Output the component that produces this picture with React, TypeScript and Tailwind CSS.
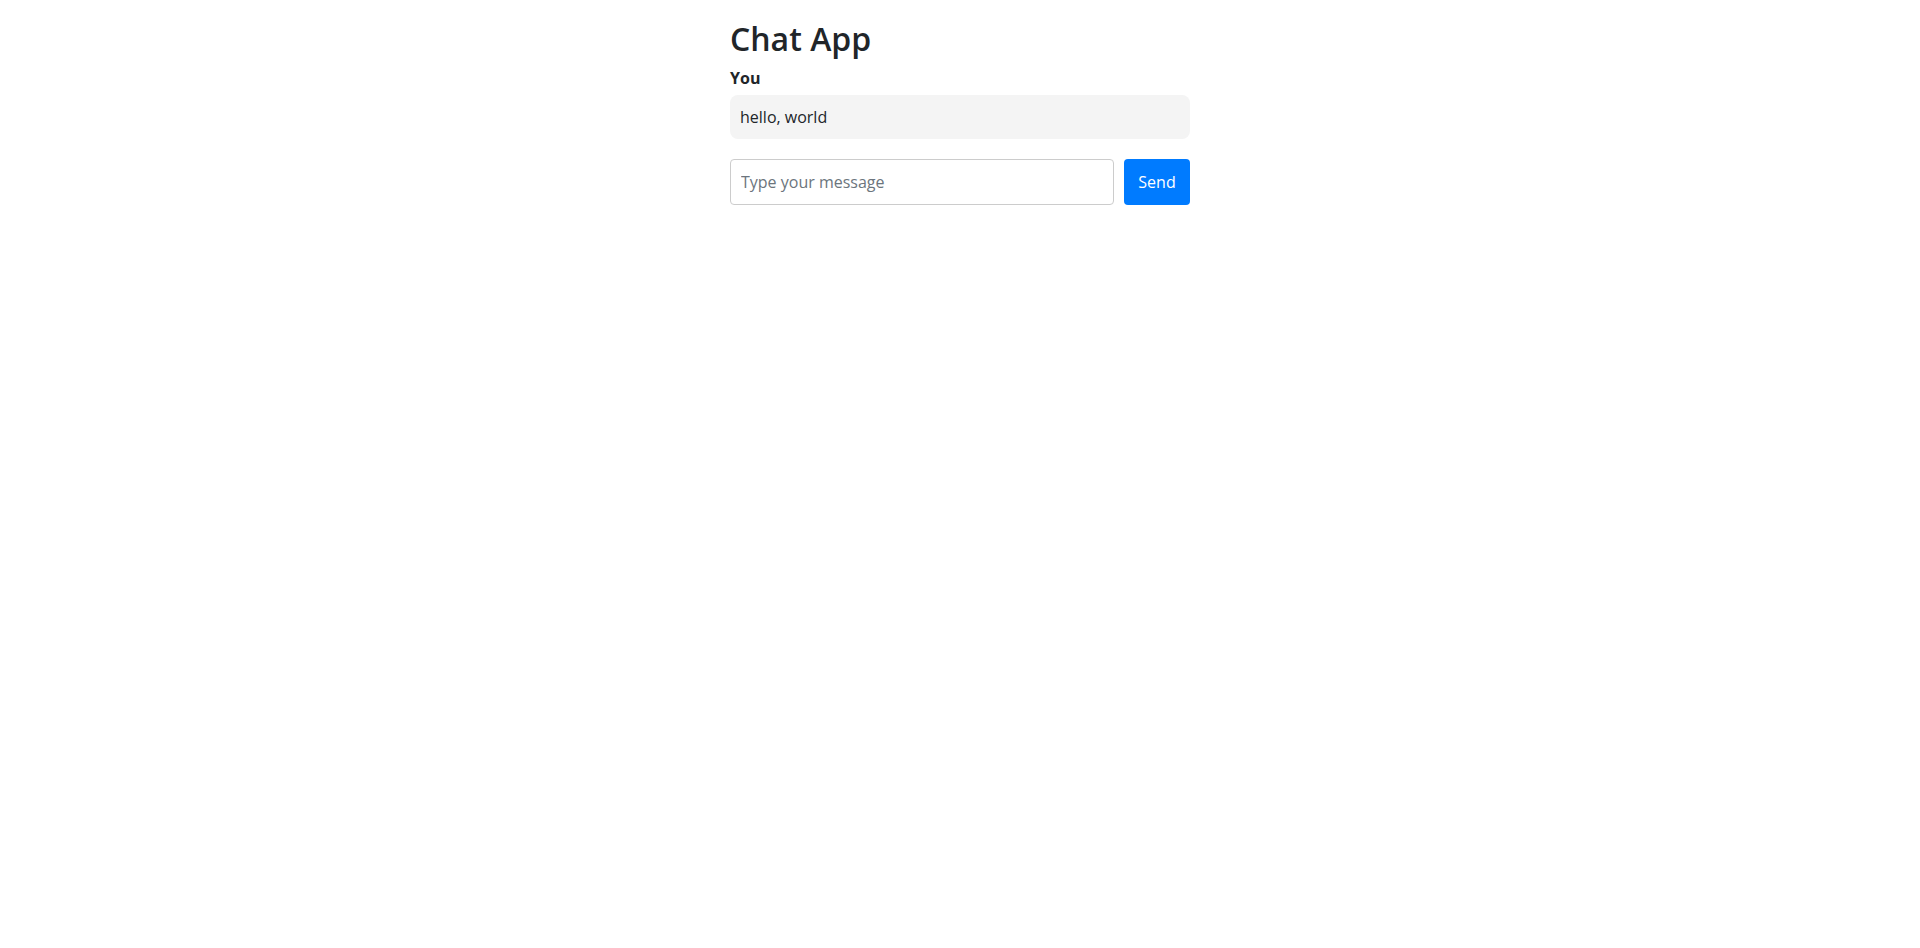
import React from "react";

export default function App() {
  return (
    <div className="min-h-screen bg-white text-[#212529]" style={{ fontFamily: '"Open Sans", "Noto Sans", sans-serif' }}>
      <div className="mx-auto w-[460px] pt-[20px]">
        <h2 className="mb-[8px] text-[32px] font-semibold leading-[38px]">Chat App</h2>
        <div className="flex flex-col">
          <div className="mb-[5px] text-[16px] font-bold leading-[24px]">You</div>
          <div className="rounded-[8px] bg-[#f4f4f4] px-[10px] py-[10px] text-[16px] leading-[24px]">hello, world</div>
        </div>
        <div className="mt-[20px] flex gap-[10px]">
          <input
            className="h-[46px] flex-1 rounded-[4px] border border-[#cccccc] px-[10px] text-[16px] outline-none placeholder:text-[#6c757d]"
            placeholder="Type your message"
          />
          <button className="h-[46px] w-[66px] rounded-[4px] bg-[#007bff] text-[16px] text-white">Send</button>
        </div>
      </div>
    </div>
  );
}
